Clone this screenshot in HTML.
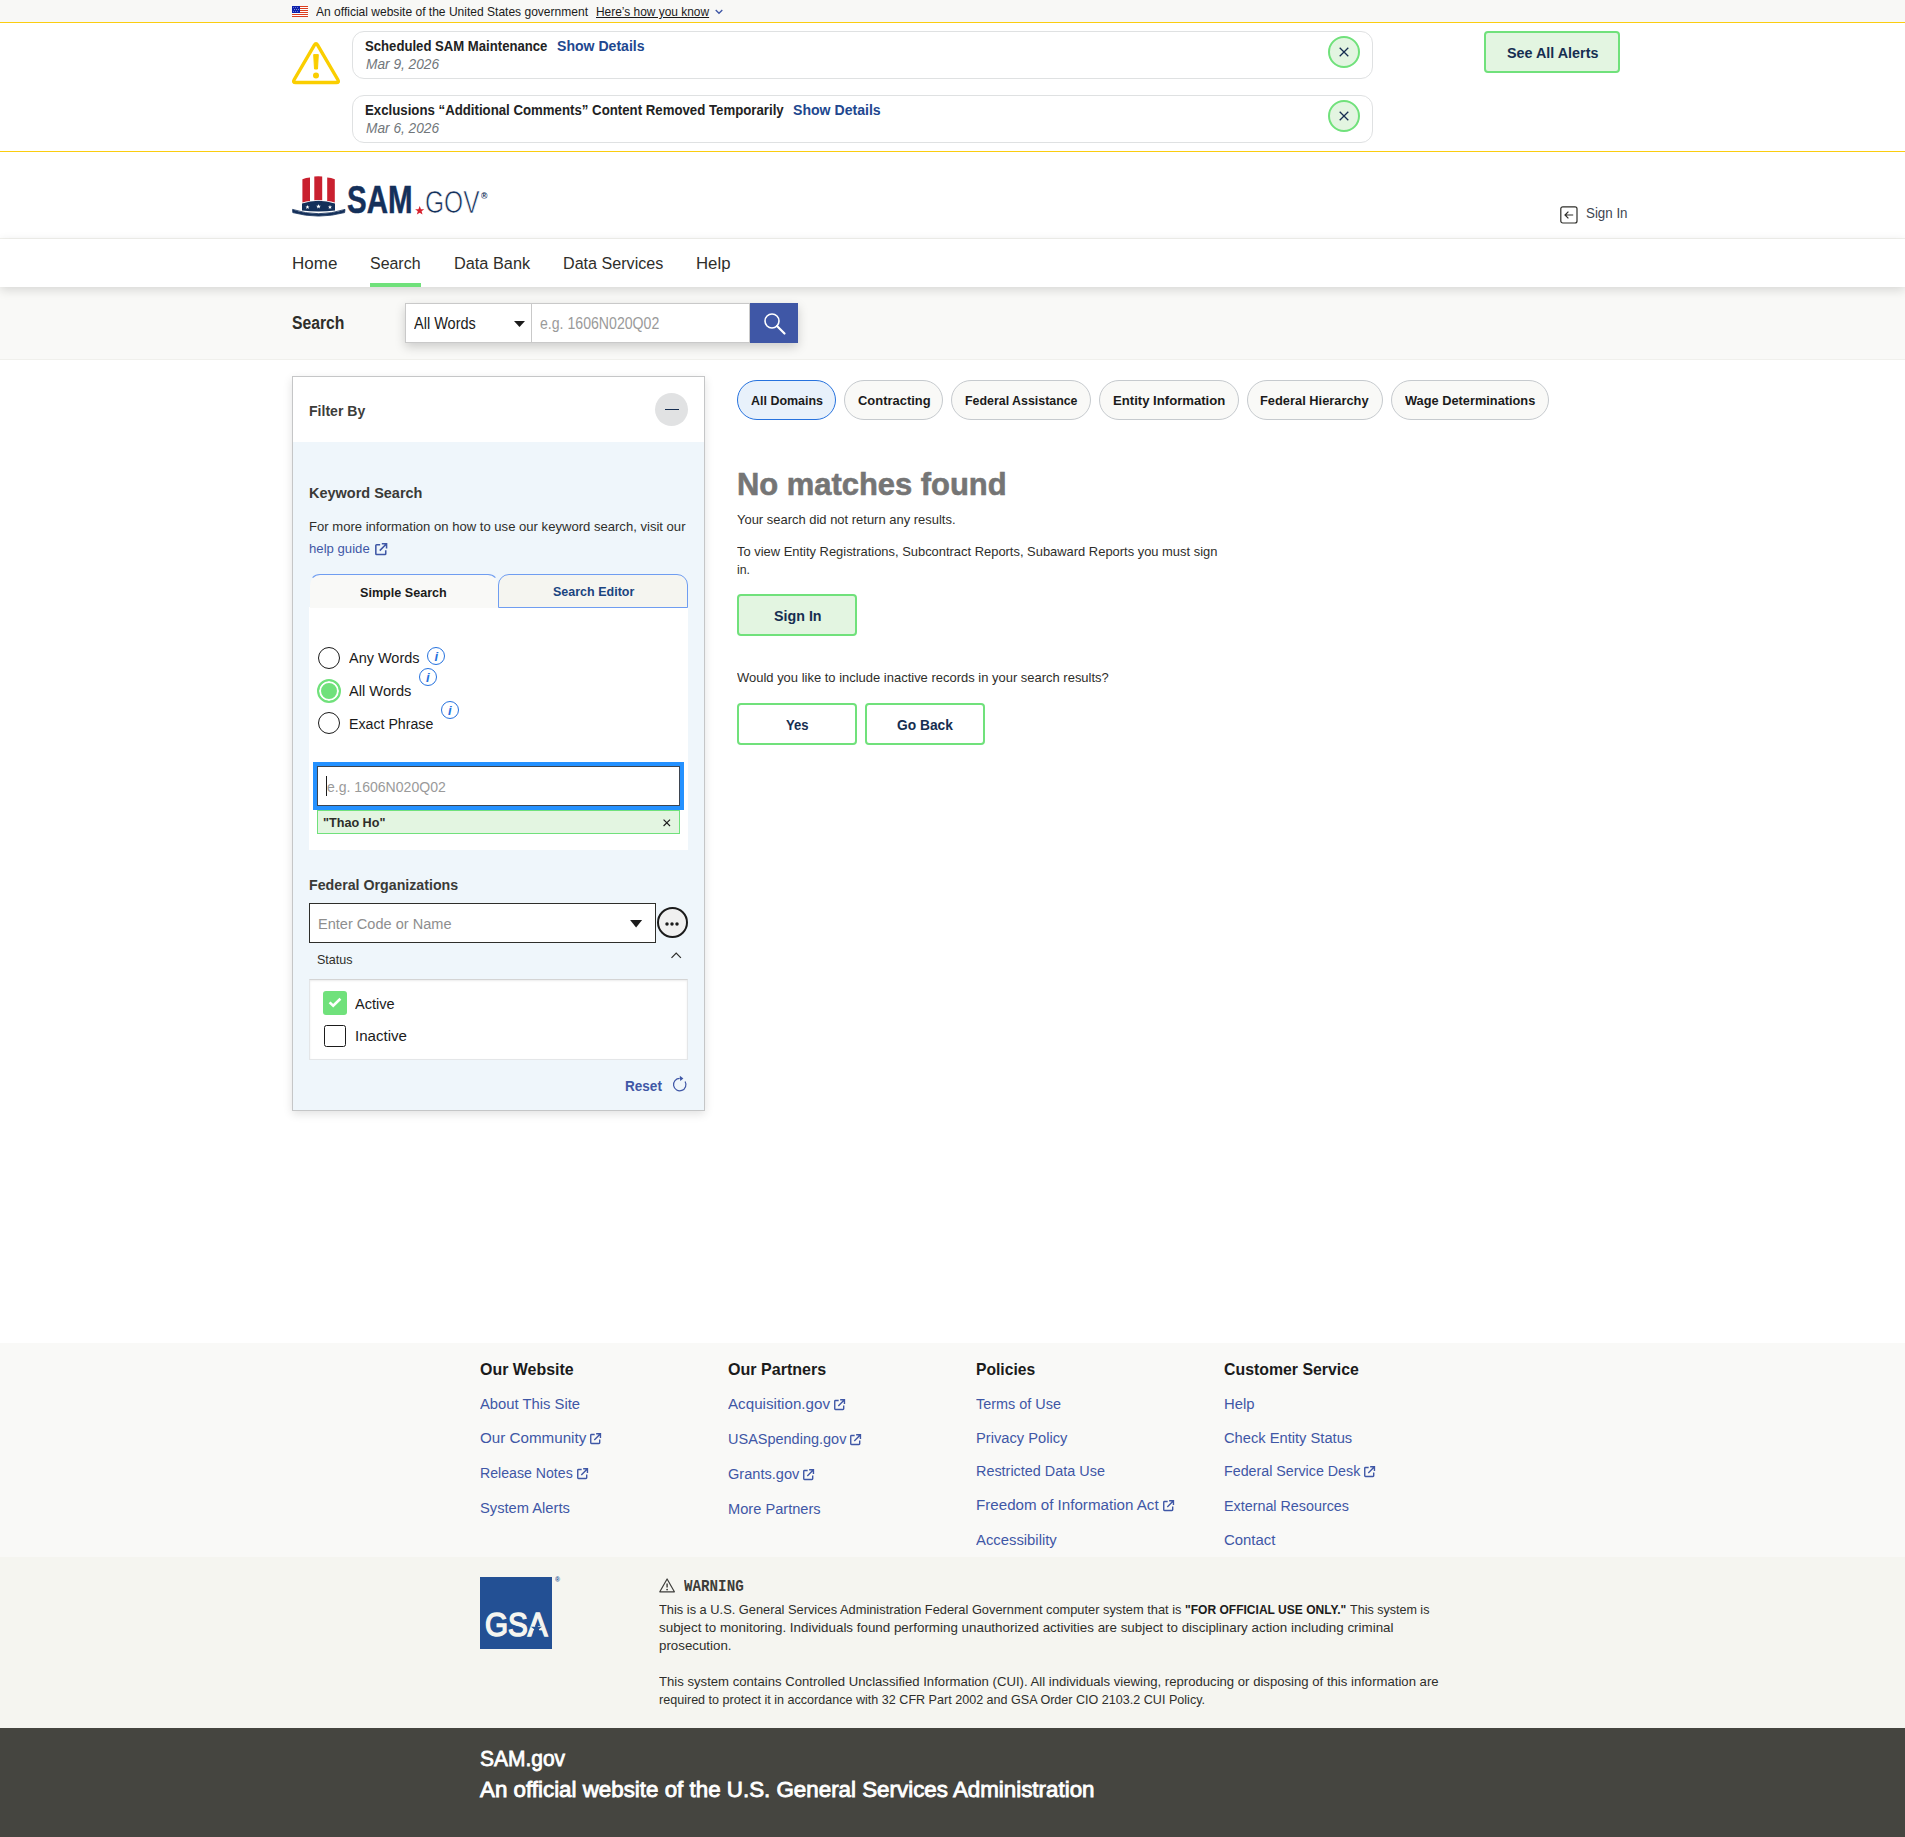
<!DOCTYPE html>
<html lang="en"><head><meta charset="utf-8"><title>SAM.gov | Search</title>
<style>
html,body{margin:0;padding:0}
body{width:1905px;height:1837px;position:relative;overflow:hidden;background:#fff;font-family:'Liberation Sans',sans-serif;color:#1b1b1b}
.t{position:absolute;white-space:pre;line-height:1;transform-origin:0 0;display:block}
.b{position:absolute;box-sizing:border-box}
svg{position:absolute;overflow:visible}
.pill{position:absolute;box-sizing:border-box;top:380px;height:40px;border:1px solid #c6cace;border-radius:20px;background:#f9f9f7}
.btn{position:absolute;box-sizing:border-box;border:2px solid #70e17b;border-radius:4px;background:#e3f5e1}

</style></head>
<body>
<div class="b" style="left:0;top:0;width:1905px;height:22px;background:#f8f8f6"></div>
<svg style="left:292px;top:6px" width="16" height="11" viewBox="0 0 16 11"><rect width="16" height="11" fill="#fff"/>
<g fill="#db3e1f"><rect y="0" width="16" height="1"/><rect y="2" width="16" height="1"/><rect y="4" width="16" height="1"/><rect y="6" width="16" height="1"/><rect y="8" width="16" height="1"/><rect y="10" width="16" height="1"/></g>
<rect width="8" height="7" fill="#0f22ad"/><g fill="#fff"><circle cx="1.5" cy="1.6" r=".45"/><circle cx="3.5" cy="1.6" r=".45"/><circle cx="5.5" cy="1.6" r=".45"/><circle cx="2.5" cy="3.5" r=".45"/><circle cx="4.5" cy="3.5" r=".45"/><circle cx="6.5" cy="3.5" r=".45"/><circle cx="1.5" cy="5.4" r=".45"/><circle cx="3.5" cy="5.4" r=".45"/><circle cx="5.5" cy="5.4" r=".45"/></g></svg>
<span class="t" style="left:315.8px;top:5.1px;font-size:13px;color:#1b1b1b;transform:scaleX(0.9256);">An official website of the United States government</span>
<span class="t" style="left:595.6px;top:5.1px;font-size:13px;color:#1b1b1b;transform:scaleX(0.9171);text-decoration:underline;">Here’s how you know</span>
<svg style="left:715px;top:9px" width="8" height="6" viewBox="0 0 8 6"><path d="M0.7 1 L4 4.3 L7.3 1" fill="none" stroke="#3f57a6" stroke-width="1.3"/></svg>
<div class="b" style="left:0;top:22px;width:1905px;height:130px;background:#fff;border-top:1px solid #fbcd10;border-bottom:1px solid #fbcd10"></div>
<svg style="left:292px;top:41.5px" width="48" height="42.5" viewBox="0 0 48 42.5"><path d="M25.62 3.16 L45.88 37.74 Q47.50 40.50 44.30 40.50 L3.70 40.50 Q0.50 40.50 2.12 37.74 L22.38 3.16 Q24.00 0.40 25.62 3.16 Z" fill="none" stroke="#face00" stroke-width="3.4" stroke-linejoin="round"/>
<path d="M21.7 12.6 L26.3 12.6 L25.5 27 L22.5 27 Z" fill="#face00" stroke="#face00" stroke-width="1" stroke-linejoin="round"/><circle cx="24" cy="33.5" r="3" fill="#face00"/></svg>
<div class="b" style="left:352px;top:31px;width:1021px;height:48px;border:1px solid #dfe1e2;border-radius:12px;background:#fff"></div>
<span class="t" style="left:364.9px;top:39.2px;font-size:14px;color:#222222;transform:scaleX(0.9379);font-weight:700;">Scheduled SAM Maintenance</span>
<span class="t" style="left:556.6px;top:39.2px;font-size:14px;color:#21478f;transform:scaleX(1.0053);font-weight:700;">Show Details</span>
<span class="t" style="left:365.6px;top:57.3px;font-size:14px;color:#71767a;transform:scaleX(0.9783);font-style:italic;">Mar 9, 2026</span>
<div class="b" style="left:1328px;top:35.5px;width:32px;height:32px;border:2px solid #70e17b;border-radius:16px;background:#e3f5e1"></div>
<svg style="left:1339px;top:46.5px" width="10" height="10" viewBox="0 0 10 10"><path d="M0.7 0.7 L9.3 9.3 M9.3 0.7 L0.7 9.3" stroke="#162e51" stroke-width="1.3" fill="none"/></svg>
<div class="b" style="left:352px;top:95px;width:1021px;height:48px;border:1px solid #dfe1e2;border-radius:12px;background:#fff"></div>
<span class="t" style="left:364.9px;top:103.2px;font-size:14px;color:#222222;transform:scaleX(0.9448);font-weight:700;">Exclusions “Additional Comments” Content Removed Temporarily</span>
<span class="t" style="left:792.8px;top:103.2px;font-size:14px;color:#21478f;transform:scaleX(1.0064);font-weight:700;">Show Details</span>
<span class="t" style="left:365.6px;top:121.3px;font-size:14px;color:#71767a;transform:scaleX(0.9783);font-style:italic;">Mar 6, 2026</span>
<div class="b" style="left:1328px;top:99.5px;width:32px;height:32px;border:2px solid #70e17b;border-radius:16px;background:#e3f5e1"></div>
<svg style="left:1339px;top:110.5px" width="10" height="10" viewBox="0 0 10 10"><path d="M0.7 0.7 L9.3 9.3 M9.3 0.7 L0.7 9.3" stroke="#162e51" stroke-width="1.3" fill="none"/></svg>
<div class="btn" style="left:1484px;top:31px;width:136px;height:42px"></div>
<span class="t" style="left:1506.8px;top:45.4px;font-size:15.5px;color:#162e51;transform:scaleX(0.9251);font-weight:700;">See All Alerts</span>
<div class="b" style="left:0;top:238px;width:1905px;height:1px;background:#f3f3ef"></div>
<svg style="left:292px;top:176px" width="54" height="40" viewBox="0 0 54 40">
<path d="M10.4 3.2 Q14 1.9 18 1.6 L18 25 Q14 25.4 10.4 26.6 Z" fill="#c9202f"/>
<path d="M22.3 0.6 Q26.3 0 30.2 0.6 L30.2 24.2 Q26.3 23.8 22.3 24.2 Z" fill="#c9202f"/>
<path d="M35.2 1.6 Q39.2 1.9 42.8 3.2 L42.8 26.6 Q39.2 25.4 35.2 25 Z" fill="#c9202f"/>
<path d="M10 27.6 Q26.5 22 43 27.6 L43 34.6 Q26.5 36.6 10 34.6 Z" fill="#14305a"/>
<path d="M0.6 33.4 Q26.5 42 53 33.4 L52.6 36.6 Q26.5 43.6 0.8 36.6 Z" fill="#14305a" stroke="#14305a" stroke-width="0.8" stroke-linejoin="round"/>
<g fill="#fff"><path id="st" d="M0 -2.1 L0.6 -0.65 L2 -0.65 L0.9 0.25 L1.3 1.7 L0 0.85 L-1.3 1.7 L-0.9 0.25 L-2 -0.65 L-0.6 -0.65 Z" transform="translate(15.5 31.2)"/>
<path d="M0 -2.4 L0.7 -0.75 L2.3 -0.75 L1 0.3 L1.5 1.95 L0 1 L-1.5 1.95 L-1 0.3 L-2.3 -0.75 L-0.7 -0.75 Z" transform="translate(26.5 30.6)"/>
<path d="M0 -2.1 L0.6 -0.65 L2 -0.65 L0.9 0.25 L1.3 1.7 L0 0.85 L-1.3 1.7 L-0.9 0.25 L-2 -0.65 L-0.6 -0.65 Z" transform="translate(38 31.2)"/></g>
</svg>
<span class="t" style="left:347.4px;top:180.4px;font-size:39.2px;color:#14305a;transform:scaleX(0.7521);font-weight:700;-webkit-text-stroke:0.5px #14305a;">SAM</span>
<svg style="left:415px;top:206px" width="9.4" height="9" viewBox="-4.7 -4.7 9.4 9"><path d="M0 -4.6 L1.25 -1.4 L4.6 -1.4 L1.9 0.65 L2.85 3.9 L0 1.95 L-2.85 3.9 L-1.9 0.65 L-4.6 -1.4 L-1.25 -1.4 Z" fill="#d7222f"/></svg>
<span class="t" style="left:425.0px;top:186.8px;font-size:30.5px;color:#14305a;transform:scaleX(0.8053);-webkit-text-stroke:0.7px #fff;">GOV</span>
<span class="t" style="left:480.6px;top:192.0px;font-size:8.5px;color:#14305a;transform:scaleX(1.0214);font-weight:700;">®</span>
<svg style="left:1560px;top:205.5px" width="18" height="18" viewBox="0 0 18 18"><rect x="0.8" y="0.8" width="16.2" height="16.2" rx="2" fill="none" stroke="#2e2e2a" stroke-width="1.2"/>
<path d="M13.2 9 L5 9 M8.4 5.6 L5 9 L8.4 12.4" fill="none" stroke="#2e2e2a" stroke-width="1.2"/></svg>
<span class="t" style="left:1586.0px;top:205.3px;font-size:15px;color:#3d4551;transform:scaleX(0.8886);">Sign In</span>
<div class="b" style="left:0;top:287px;width:1905px;height:72.5px;background:#f9f9f7;border-bottom:1px solid #f0f0ec"></div>
<div class="b" style="left:0;top:239px;width:1905px;height:48px;background:#fff;box-shadow:0 3px 10px rgba(0,0,0,.14)"></div>
<span class="t" style="left:292.0px;top:255.8px;font-size:16.7px;color:#2e2e2a;transform:scaleX(1.0199);">Home</span>
<span class="t" style="left:370.0px;top:255.8px;font-size:16.7px;color:#2e2e2a;transform:scaleX(0.9551);">Search</span>
<span class="t" style="left:453.8px;top:255.8px;font-size:16.7px;color:#2e2e2a;transform:scaleX(0.9766);">Data Bank</span>
<span class="t" style="left:562.6px;top:255.8px;font-size:16.7px;color:#2e2e2a;transform:scaleX(0.9656);">Data Services</span>
<span class="t" style="left:695.6px;top:255.8px;font-size:16.7px;color:#2e2e2a;transform:scaleX(1.0050);">Help</span>
<div class="b" style="left:370px;top:283px;width:50.6px;height:4px;background:#70e17b"></div>
<span class="t" style="left:292.2px;top:315.4px;font-size:17.5px;color:#2e2e2a;transform:scaleX(0.8976);font-weight:700;">Search</span>
<div class="b" style="left:405px;top:303px;width:393px;height:40px;background:#fff;box-shadow:0 4px 10px rgba(0,0,0,.18)"></div>
<div class="b" style="left:405px;top:303px;width:127px;height:40px;background:#fff;border:1px solid #c9c9c9"></div>
<div class="b" style="left:531px;top:303px;width:219px;height:40px;background:#fff;border:1px solid #c9c9c9"></div>
<span class="t" style="left:414.3px;top:315.5px;font-size:16px;color:#1b1b1b;transform:scaleX(0.9065);">All Words</span>
<svg style="left:513.5px;top:321px" width="11" height="6" viewBox="0 0 11 6"><path d="M0 0 L11 0 L5.5 6 Z" fill="#1b1b1b"/></svg>
<span class="t" style="left:540.4px;top:315.5px;font-size:16px;color:#9a9a9a;transform:scaleX(0.8823);">e.g. 1606N020Q02</span>
<div class="b" style="left:750px;top:303px;width:48px;height:40px;background:#3f57a6"></div>
<svg style="left:762px;top:311px" width="26" height="26" viewBox="0 0 26 26"><circle cx="10" cy="10" r="7" fill="none" stroke="#fff" stroke-width="1.6"/><path d="M15 15 L22.5 22.5" stroke="#fff" stroke-width="2.2" stroke-linecap="round"/></svg>
<div class="b" style="left:292px;top:376px;width:413px;height:735px;background:#eff6fb;border:1px solid #c5c6c7;box-shadow:0 3px 9px rgba(0,0,0,.12)"></div>
<div class="b" style="left:293px;top:377px;width:411px;height:65px;background:#fff"></div>
<span class="t" style="left:309.3px;top:403.4px;font-size:15.2px;color:#3d3d3a;transform:scaleX(0.9249);font-weight:700;">Filter By</span>
<div class="b" style="left:655px;top:393px;width:33px;height:33px;border-radius:17px;background:#e1e2e3"></div>
<div class="b" style="left:664.5px;top:408.6px;width:14.5px;height:1.4px;background:#162e51"></div>
<span class="t" style="left:309.3px;top:485.3px;font-size:15px;color:#3a3a37;transform:scaleX(0.9647);font-weight:700;">Keyword Search</span>
<span class="t" style="left:309.3px;top:519.9px;font-size:13.5px;color:#2e2e2a;transform:scaleX(0.9687);">For more information on how to use our keyword search, visit our</span>
<span class="t" style="left:309.3px;top:541.8px;font-size:13.5px;color:#3f57a6;transform:scaleX(0.9741);">help guide</span>
<svg style="left:375px;top:542.6px" width="12.4" height="12.4" viewBox="0 0 12 12"><path d="M5 1.6 L1.6 1.6 Q0.8 1.6 0.8 2.4 L0.8 10.4 Q0.8 11.2 1.6 11.2 L9.6 11.2 Q10.4 11.2 10.4 10.4 L10.4 7" fill="none" stroke="#3f57a6" stroke-width="1.5"/><path d="M6.6 0.8 L11.2 0.8 L11.2 5.4 M11.2 0.8 L4.6 7.4" fill="none" stroke="#3f57a6" stroke-width="1.5"/></svg>
<div class="b" style="left:309px;top:607px;width:379px;height:243px;background:#fff"></div>
<div class="b" style="left:498px;top:574px;width:190px;height:34px;background:#f5f5f0;border:1px solid #6f9df1;border-radius:11px 11px 0 0"></div>
<div class="b" style="left:309px;top:574px;width:190px;height:34px;background:#f9f9f7;border:1px solid transparent;border-top-color:#6f9df1;border-bottom:none;border-radius:11px 11px 0 0;background-clip:padding-box"></div>
<span class="t" style="left:359.9px;top:586.2px;font-size:13.5px;color:#1b1b1b;transform:scaleX(0.9329);font-weight:700;">Simple Search</span>
<span class="t" style="left:552.5px;top:584.6px;font-size:13.5px;color:#1a4480;transform:scaleX(0.9262);font-weight:700;">Search Editor</span>
<div class="b" style="left:318px;top:646.6px;width:22px;height:22px;border-radius:11px;background:#fff;border:1.7px solid #1b1b1b"></div>
<span class="t" style="left:348.8px;top:650.2px;font-size:15.4px;color:#1b1b1b;transform:scaleX(0.9402);">Any Words</span>
<div class="b" style="left:427.4px;top:647.3px;width:18px;height:18px;border-radius:9px;border:1.5px solid #2672de"></div>
<span class="t" style="left:434.5px;top:650.2px;font-size:13px;color:#2672de;transform:scaleX(1.0000);font-weight:700;font-style:italic;">i</span>
<div class="b" style="left:317px;top:678.7px;width:24px;height:24px;border-radius:12px;background:#70e17b;border:2px solid #70e17b;box-shadow:inset 0 0 0 2px #fff"></div>
<span class="t" style="left:348.8px;top:683.3px;font-size:15.4px;color:#1b1b1b;transform:scaleX(0.9515);">All Words</span>
<div class="b" style="left:419px;top:668px;width:18px;height:18px;border-radius:9px;border:1.5px solid #2672de"></div>
<span class="t" style="left:426.1px;top:670.9px;font-size:13px;color:#2672de;transform:scaleX(1.0000);font-weight:700;font-style:italic;">i</span>
<div class="b" style="left:318px;top:712px;width:22px;height:22px;border-radius:11px;background:#fff;border:1.7px solid #1b1b1b"></div>
<span class="t" style="left:348.8px;top:715.6px;font-size:15.4px;color:#1b1b1b;transform:scaleX(0.9208);">Exact Phrase</span>
<div class="b" style="left:441px;top:701px;width:18px;height:18px;border-radius:9px;border:1.5px solid #2672de"></div>
<span class="t" style="left:448.1px;top:703.9px;font-size:13px;color:#2672de;transform:scaleX(1.0000);font-weight:700;font-style:italic;">i</span>
<div class="b" style="left:313px;top:762px;width:371px;height:48px;background:#2491ff"></div>
<div class="b" style="left:317px;top:766px;width:363px;height:40px;background:#fff;border:1px solid #3d4551"></div>
<div class="b" style="left:326px;top:776px;width:1px;height:20px;background:#1b1b1b"></div>
<span class="t" style="left:326.6px;top:779.3px;font-size:15.4px;color:#9a9a9a;transform:scaleX(0.9133);">e.g. 1606N020Q02</span>
<div class="b" style="left:317px;top:810px;width:363px;height:24px;background:#e3f5e1;border:1px solid #70e17b"></div>
<span class="t" style="left:323.4px;top:815.8px;font-size:13.5px;color:#2e2e2a;transform:scaleX(0.9342);font-weight:700;">&quot;Thao Ho&quot;</span>
<svg style="left:663.2px;top:818.8px" width="7.6" height="7.6" viewBox="0 0 8 8"><path d="M0.6 0.6 L7.4 7.4 M7.4 0.6 L0.6 7.4" stroke="#1b1b1b" stroke-width="1.2" fill="none"/></svg>
<span class="t" style="left:309.3px;top:877.3px;font-size:15px;color:#3a3a37;transform:scaleX(0.9470);font-weight:700;">Federal Organizations</span>
<div class="b" style="left:309px;top:903px;width:347px;height:39.5px;background:#fff;border:1px solid #2e2e2a"></div>
<span class="t" style="left:318.1px;top:915.8px;font-size:15.4px;color:#8e8e8e;transform:scaleX(0.9458);">Enter Code or Name</span>
<svg style="left:629.8px;top:919.5px" width="12.2" height="7.5" viewBox="0 0 12 7.5"><path d="M0 0 L12 0 L6 7.5 Z" fill="#1b1b1b"/></svg>
<div class="b" style="left:656.5px;top:907px;width:31px;height:31px;border-radius:16px;background:#f0f0f0;border:2px solid #1b1b1b"></div>
<svg style="left:664.9px;top:922px" width="14" height="4" viewBox="0 0 14 4"><circle cx="2" cy="2" r="1.75" fill="#1b1b1b"/><circle cx="7" cy="2" r="1.75" fill="#1b1b1b"/><circle cx="12" cy="2" r="1.75" fill="#1b1b1b"/></svg>
<span class="t" style="left:317.4px;top:952.5px;font-size:13.5px;color:#2e2e2a;transform:scaleX(0.9300);">Status</span>
<svg style="left:671.3px;top:952px" width="10.4" height="6.4" viewBox="0 0 10.4 6.4"><path d="M0.5 5.9 L5.2 1 L9.9 5.9" fill="none" stroke="#2e2e2a" stroke-width="1.2"/></svg>
<div class="b" style="left:309px;top:979px;width:379px;height:80.5px;background:#fff;border:1px solid #e4e6e8;border-top-color:#d4d4d4;box-shadow:inset 0 1px 2px rgba(0,0,0,.08)"></div>
<div class="b" style="left:323px;top:991px;width:24px;height:24px;border-radius:3px;background:#70e17b"></div>
<svg style="left:328px;top:997px" width="14" height="11" viewBox="0 0 14 11"><path d="M1.6 5.4 L5.2 8.8 L12.4 1.8" fill="none" stroke="#fff" stroke-width="2.6"/></svg>
<span class="t" style="left:355.3px;top:996.0px;font-size:15.4px;color:#1b1b1b;transform:scaleX(0.9470);">Active</span>
<div class="b" style="left:324px;top:1025px;width:22px;height:22px;border-radius:2.5px;background:#fff;border:1.8px solid #1b1b1b"></div>
<span class="t" style="left:355.3px;top:1027.8px;font-size:15.4px;color:#1b1b1b;transform:scaleX(0.9803);">Inactive</span>
<span class="t" style="left:625.3px;top:1078.3px;font-size:15px;color:#3f57a6;transform:scaleX(0.9031);font-weight:700;">Reset</span>
<svg style="left:0;top:0" width="1" height="1" viewBox="0 0 1 1"><path d="M685.1 1081.5 A6.2 6.2 0 1 1 679.7 1078.4" fill="none" stroke="#3f57a6" stroke-width="1.2"/><path d="M679.8 1075.8 L683.4 1078.5 L680.2 1081.1 Z" fill="#3f57a6"/></svg>
<div class="pill" style="left:737px;width:98.5px;border-color:#2672de;background:#e8f1fb;"></div>
<span class="t" style="left:750.5px;top:394.3px;font-size:13.5px;color:#1b1b1b;transform:scaleX(0.9229);font-weight:700;">All Domains</span>
<div class="pill" style="left:844.2px;width:98.4px;"></div>
<span class="t" style="left:857.6px;top:394.3px;font-size:13.5px;color:#1b1b1b;transform:scaleX(0.9584);font-weight:700;">Contracting</span>
<div class="pill" style="left:951.4px;width:139.6px;"></div>
<span class="t" style="left:964.7px;top:394.3px;font-size:13.5px;color:#1b1b1b;transform:scaleX(0.9179);font-weight:700;">Federal Assistance</span>
<div class="pill" style="left:1099.2px;width:139.6px;"></div>
<span class="t" style="left:1112.6px;top:394.3px;font-size:13.5px;color:#1b1b1b;transform:scaleX(0.9723);font-weight:700;">Entity Information</span>
<div class="pill" style="left:1247px;width:136px;"></div>
<span class="t" style="left:1260.4px;top:394.3px;font-size:13.5px;color:#1b1b1b;transform:scaleX(0.9521);font-weight:700;">Federal Hierarchy</span>
<div class="pill" style="left:1391.1px;width:157.7px;"></div>
<span class="t" style="left:1404.5px;top:394.3px;font-size:13.5px;color:#1b1b1b;transform:scaleX(0.9474);font-weight:700;">Wage Determinations</span>
<span class="t" style="left:737.4px;top:469.1px;font-size:31.5px;color:#757575;transform:scaleX(0.9812);font-weight:700;-webkit-text-stroke:0.6px #757575;">No matches found</span>
<span class="t" style="left:737.1px;top:512.5px;font-size:13.5px;color:#2e2e2a;transform:scaleX(0.9598);">Your search did not return any results.</span>
<span class="t" style="left:737.1px;top:544.8px;font-size:13.5px;color:#2e2e2a;transform:scaleX(0.9570);">To view Entity Registrations, Subcontract Reports, Subaward Reports you must sign</span>
<span class="t" style="left:737.1px;top:563.4px;font-size:13.5px;color:#2e2e2a;transform:scaleX(0.9113);">in.</span>
<div class="btn" style="left:737px;top:594px;width:120px;height:42px"></div>
<span class="t" style="left:773.6px;top:607.9px;font-size:15.5px;color:#162e51;transform:scaleX(0.9212);font-weight:700;">Sign In</span>
<span class="t" style="left:737.1px;top:670.9px;font-size:13.5px;color:#2e2e2a;transform:scaleX(0.9608);">Would you like to include inactive records in your search results?</span>
<div class="btn" style="left:737px;top:703px;width:120px;height:42px;background:#fff"></div>
<span class="t" style="left:786.1px;top:716.9px;font-size:15.5px;color:#162e51;transform:scaleX(0.8454);font-weight:700;">Yes</span>
<div class="btn" style="left:865px;top:703px;width:120px;height:42px;background:#fff"></div>
<span class="t" style="left:897.4px;top:716.9px;font-size:15.5px;color:#162e51;transform:scaleX(0.8888);font-weight:700;">Go Back</span>
<div class="b" style="left:0;top:1342.5px;width:1905px;height:214px;background:#f9f9f7"></div>
<div class="b" style="left:0;top:1556.5px;width:1905px;height:172px;background:#f5f5f0"></div>
<div class="b" style="left:0;top:1728px;width:1905px;height:109px;background:#454540"></div>
<span class="t" style="left:480.1px;top:1361.9px;font-size:16.7px;color:#1b1b1b;transform:scaleX(0.9563);font-weight:700;">Our Website</span>
<span class="t" style="left:480.1px;top:1396.0px;font-size:15.4px;color:#3f57a6;transform:scaleX(0.9607);">About This Site</span>
<span class="t" style="left:480.1px;top:1430.3px;font-size:15.4px;color:#3f57a6;transform:scaleX(0.9864);">Our Community</span>
<svg style="left:590.2px;top:1433px" width="11.2" height="11.2" viewBox="0 0 12 12"><path d="M5 1.6 L1.6 1.6 Q0.8 1.6 0.8 2.4 L0.8 10.4 Q0.8 11.2 1.6 11.2 L9.6 11.2 Q10.4 11.2 10.4 10.4 L10.4 7" fill="none" stroke="#3f57a6" stroke-width="1.5"/><path d="M6.6 0.8 L11.2 0.8 L11.2 5.4 M11.2 0.8 L4.6 7.4" fill="none" stroke="#3f57a6" stroke-width="1.5"/></svg>
<span class="t" style="left:480.1px;top:1465.0px;font-size:15.4px;color:#3f57a6;transform:scaleX(0.9182);">Release Notes</span>
<svg style="left:576.6px;top:1468px" width="11.2" height="11.2" viewBox="0 0 12 12"><path d="M5 1.6 L1.6 1.6 Q0.8 1.6 0.8 2.4 L0.8 10.4 Q0.8 11.2 1.6 11.2 L9.6 11.2 Q10.4 11.2 10.4 10.4 L10.4 7" fill="none" stroke="#3f57a6" stroke-width="1.5"/><path d="M6.6 0.8 L11.2 0.8 L11.2 5.4 M11.2 0.8 L4.6 7.4" fill="none" stroke="#3f57a6" stroke-width="1.5"/></svg>
<span class="t" style="left:480.1px;top:1499.8px;font-size:15.4px;color:#3f57a6;transform:scaleX(0.9554);">System Alerts</span>
<span class="t" style="left:728.2px;top:1361.9px;font-size:16.7px;color:#1b1b1b;transform:scaleX(0.9626);font-weight:700;">Our Partners</span>
<span class="t" style="left:728.2px;top:1396.3px;font-size:15.4px;color:#3f57a6;transform:scaleX(0.9852);">Acquisition.gov</span>
<svg style="left:834.0px;top:1399px" width="11.2" height="11.2" viewBox="0 0 12 12"><path d="M5 1.6 L1.6 1.6 Q0.8 1.6 0.8 2.4 L0.8 10.4 Q0.8 11.2 1.6 11.2 L9.6 11.2 Q10.4 11.2 10.4 10.4 L10.4 7" fill="none" stroke="#3f57a6" stroke-width="1.5"/><path d="M6.6 0.8 L11.2 0.8 L11.2 5.4 M11.2 0.8 L4.6 7.4" fill="none" stroke="#3f57a6" stroke-width="1.5"/></svg>
<span class="t" style="left:728.2px;top:1431.0px;font-size:15.4px;color:#3f57a6;transform:scaleX(0.9413);">USASpending.gov</span>
<svg style="left:850.4px;top:1434px" width="11.2" height="11.2" viewBox="0 0 12 12"><path d="M5 1.6 L1.6 1.6 Q0.8 1.6 0.8 2.4 L0.8 10.4 Q0.8 11.2 1.6 11.2 L9.6 11.2 Q10.4 11.2 10.4 10.4 L10.4 7" fill="none" stroke="#3f57a6" stroke-width="1.5"/><path d="M6.6 0.8 L11.2 0.8 L11.2 5.4 M11.2 0.8 L4.6 7.4" fill="none" stroke="#3f57a6" stroke-width="1.5"/></svg>
<span class="t" style="left:728.2px;top:1466.0px;font-size:15.4px;color:#3f57a6;transform:scaleX(0.9471);">Grants.gov</span>
<svg style="left:803.3px;top:1469px" width="11.2" height="11.2" viewBox="0 0 12 12"><path d="M5 1.6 L1.6 1.6 Q0.8 1.6 0.8 2.4 L0.8 10.4 Q0.8 11.2 1.6 11.2 L9.6 11.2 Q10.4 11.2 10.4 10.4 L10.4 7" fill="none" stroke="#3f57a6" stroke-width="1.5"/><path d="M6.6 0.8 L11.2 0.8 L11.2 5.4 M11.2 0.8 L4.6 7.4" fill="none" stroke="#3f57a6" stroke-width="1.5"/></svg>
<span class="t" style="left:728.2px;top:1500.8px;font-size:15.4px;color:#3f57a6;transform:scaleX(0.9506);">More Partners</span>
<span class="t" style="left:976.4px;top:1361.9px;font-size:16.7px;color:#1b1b1b;transform:scaleX(0.9385);font-weight:700;">Policies</span>
<span class="t" style="left:976.4px;top:1396.0px;font-size:15.4px;color:#3f57a6;transform:scaleX(0.9365);">Terms of Use</span>
<span class="t" style="left:976.4px;top:1430.3px;font-size:15.4px;color:#3f57a6;transform:scaleX(0.9541);">Privacy Policy</span>
<span class="t" style="left:976.4px;top:1463.3px;font-size:15.4px;color:#3f57a6;transform:scaleX(0.9360);">Restricted Data Use</span>
<span class="t" style="left:976.4px;top:1496.5px;font-size:15.4px;color:#3f57a6;transform:scaleX(0.9836);">Freedom of Information Act</span>
<svg style="left:1162.8px;top:1500px" width="11.2" height="11.2" viewBox="0 0 12 12"><path d="M5 1.6 L1.6 1.6 Q0.8 1.6 0.8 2.4 L0.8 10.4 Q0.8 11.2 1.6 11.2 L9.6 11.2 Q10.4 11.2 10.4 10.4 L10.4 7" fill="none" stroke="#3f57a6" stroke-width="1.5"/><path d="M6.6 0.8 L11.2 0.8 L11.2 5.4 M11.2 0.8 L4.6 7.4" fill="none" stroke="#3f57a6" stroke-width="1.5"/></svg>
<span class="t" style="left:976.4px;top:1532.0px;font-size:15.4px;color:#3f57a6;transform:scaleX(0.9639);">Accessibility</span>
<span class="t" style="left:1224.2px;top:1361.9px;font-size:16.7px;color:#1b1b1b;transform:scaleX(0.9498);font-weight:700;">Customer Service</span>
<span class="t" style="left:1224.2px;top:1396.0px;font-size:15.4px;color:#3f57a6;transform:scaleX(0.9635);">Help</span>
<span class="t" style="left:1224.2px;top:1430.3px;font-size:15.4px;color:#3f57a6;transform:scaleX(0.9545);">Check Entity Status</span>
<span class="t" style="left:1224.2px;top:1463.3px;font-size:15.4px;color:#3f57a6;transform:scaleX(0.9264);">Federal Service Desk</span>
<svg style="left:1364.3px;top:1466px" width="11.2" height="11.2" viewBox="0 0 12 12"><path d="M5 1.6 L1.6 1.6 Q0.8 1.6 0.8 2.4 L0.8 10.4 Q0.8 11.2 1.6 11.2 L9.6 11.2 Q10.4 11.2 10.4 10.4 L10.4 7" fill="none" stroke="#3f57a6" stroke-width="1.5"/><path d="M6.6 0.8 L11.2 0.8 L11.2 5.4 M11.2 0.8 L4.6 7.4" fill="none" stroke="#3f57a6" stroke-width="1.5"/></svg>
<span class="t" style="left:1224.2px;top:1498.3px;font-size:15.4px;color:#3f57a6;transform:scaleX(0.9307);">External Resources</span>
<span class="t" style="left:1224.2px;top:1532.0px;font-size:15.4px;color:#3f57a6;transform:scaleX(0.9690);">Contact</span>
<div class="b" style="left:480px;top:1577px;width:72px;height:72px;background:#235094"></div>
<span class="t" style="left:484.6px;top:1608.0px;font-size:33.6px;color:#f5f5f0;transform:scaleX(0.8827);-webkit-text-stroke:1.5px #f5f5f0;">GSA</span>
<svg style="left:529.6px;top:1621.6px" width="13" height="13" viewBox="-6.5 -6.5 13 13"><path d="M0 -5.6 L1.5 -1.7 L5.6 -1.7 L2.3 0.8 L3.5 4.8 L0 2.4 L-3.5 4.8 L-2.3 0.8 L-5.6 -1.7 L-1.5 -1.7 Z" fill="#235094"/></svg>
<span class="t" style="left:554.8px;top:1576.9px;font-size:6.5px;color:#235094;transform:scaleX(1.0423);font-weight:700;">®</span>
<svg style="left:658.8px;top:1578px" width="16.2" height="14.6" viewBox="0 0 16.2 14.6"><path d="M8.1 1 L15.4 13.8 L0.8 13.8 Z" fill="none" stroke="#3d3d3a" stroke-width="1.2" stroke-linejoin="round"/><path d="M8.1 5.4 L8.1 9.6" stroke="#3d3d3a" stroke-width="1.4"/><circle cx="8.1" cy="11.6" r="0.9" fill="#3d3d3a"/></svg>
<span class="t" style="left:683.6px;top:1578.8px;font-size:16.8px;color:#3d3d3a;transform:scaleX(0.8468);font-weight:700;font-family:'Liberation Mono',monospace;">WARNING</span>
<span class="t" style="left:659.4px;top:1603.0px;font-size:13.5px;color:#2e2e2a;transform:scaleX(0.9499);">This is a U.S. General Services Administration Federal Government computer system that is</span>
<span class="t" style="left:1184.9px;top:1603.0px;font-size:13.5px;color:#1b1b1b;transform:scaleX(0.8915);font-weight:700;">&quot;FOR OFFICIAL USE ONLY.&quot;</span>
<span class="t" style="left:1349.6px;top:1603.0px;font-size:13.5px;color:#2e2e2a;transform:scaleX(0.9285);">This system is</span>
<span class="t" style="left:659.4px;top:1620.9px;font-size:13.5px;color:#2e2e2a;transform:scaleX(0.9907);">subject to monitoring. Individuals found performing unauthorized activities are subject to disciplinary action including criminal</span>
<span class="t" style="left:659.4px;top:1638.8px;font-size:13.5px;color:#2e2e2a;transform:scaleX(0.9858);">prosecution.</span>
<span class="t" style="left:659.4px;top:1675.1px;font-size:13.5px;color:#2e2e2a;transform:scaleX(0.9728);">This system contains Controlled Unclassified Information (CUI). All individuals viewing, reproducing or disposing of this information are</span>
<span class="t" style="left:659.4px;top:1693.0px;font-size:13.5px;color:#2e2e2a;transform:scaleX(0.9309);">required to protect it in accordance with 32 CFR Part 2002 and GSA Order CIO 2103.2 CUI Policy.</span>
<span class="t" style="left:480.1px;top:1747.6px;font-size:22.2px;color:#fff;transform:scaleX(0.9452);-webkit-text-stroke:0.8px #fff;">SAM.gov</span>
<span class="t" style="left:480.1px;top:1778.6px;font-size:22.2px;color:#fff;transform:scaleX(1.0073);-webkit-text-stroke:0.85px #fff;">An official website of the U.S. General Services Administration</span>
</body></html>
